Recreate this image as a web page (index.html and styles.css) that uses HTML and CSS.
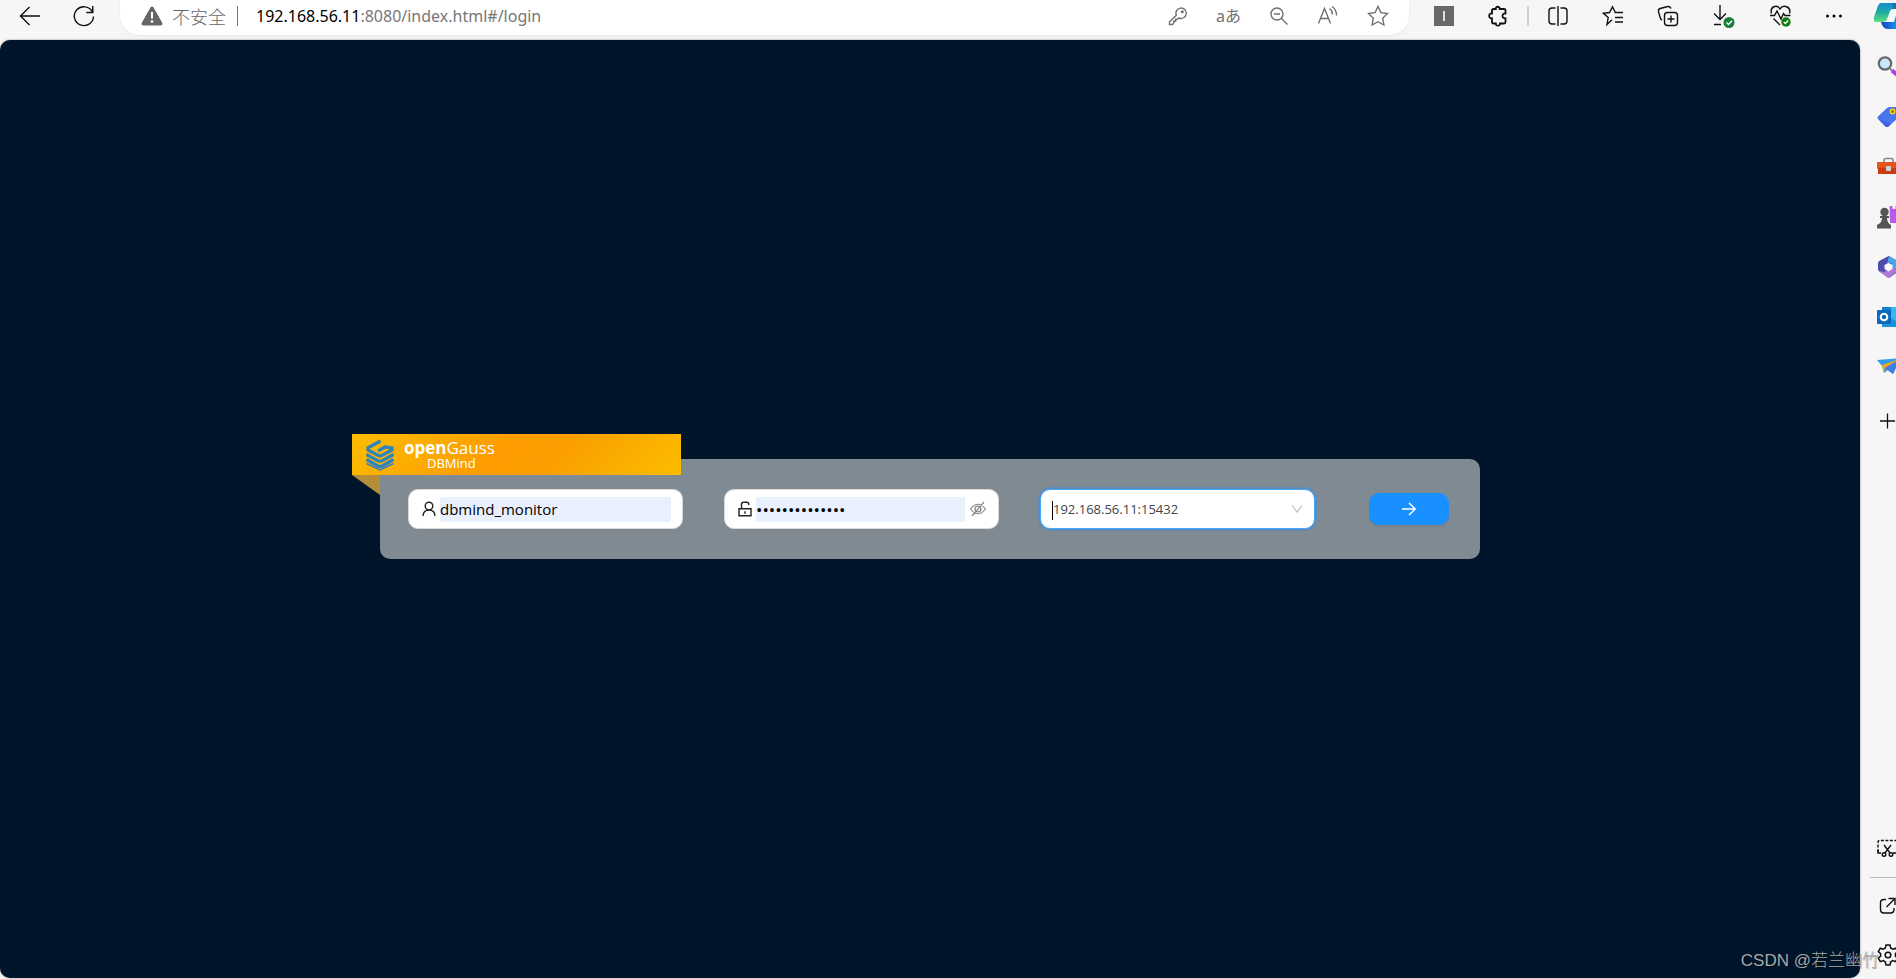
FILE: index.html
```html
<!DOCTYPE html>
<html lang="zh-CN">
<head>
<meta charset="utf-8">
<title>DBMind</title>
<link rel="stylesheet" href="styles.css">
</head>
<body>
<header class="toolbar">
  <button class="tool" type="button" aria-label="Back"><svg width="24" height="24" viewBox="0 0 24 24"><path d="M22 12H2.500M11.500 3 2.500 12 11.500 21"/></svg></button>
  <button class="tool reload" type="button" aria-label="Refresh"><svg width="24" height="24" viewBox="0 0 24 24"><path d="M20.500 8A9.600 9.400 0 1 0 21.500 12.500M20.800 2v6.500h-6.500"/></svg></button>
  <div class="address">
    <svg class="warn" width="22" height="20" viewBox="0 0 22 20"><path d="M11 0.500q1 0 1.600 1L21.300 17q.6 2-1.300 2.500H2Q0 19 .7 17L9.400 1.500q.6-1 1.600-1z" fill="#666"/><path d="M11 6v6.500" stroke="#fff" stroke-width="2"/><circle cx="11" cy="15.500" r="1.300" fill="#fff"/></svg>
    <span class="insecure">不安全</span>
    <span class="divider"></span>
    <span class="url"><b>192.168.56.11</b>:8080/index.html#/login</span>
    <div class="address-icons">
      <button class="tool" type="button" aria-label="Password"><svg width="20" height="20" viewBox="0 0 20 20"><path d="M8.300 9.300A5.200 5.200 0 1 1 11 12L9.500 13.300H7.700v2H5.700v2L4.500 18.500H1.500v-2.700z"/><circle cx="14.300" cy="5.700" r=".8"/></svg></button>
      <button class="tool letters" type="button">aあ</button>
      <button class="tool" type="button" aria-label="Zoom"><svg width="20" height="20" viewBox="0 0 20 20"><circle cx="8" cy="8" r="6"/><path d="M12.500 12.500 18.500 18.500M5 8h6"/></svg></button>
      <button class="tool" type="button" aria-label="Read aloud"><svg width="22" height="22" viewBox="0 0 22 22"><path d="M1.500 18.500 7.500 3.500 13.500 18.500M3.500 13.500h8M12.500 3.500q3 2 3 6M15 1.500q4.500 3 4.500 9"/></svg></button>
      <button class="tool" type="button" aria-label="Favorite"><svg width="22" height="22" viewBox="0 0 22 22"><path d="M11 1.500 13.900 7.600 20.500 8.500 15.700 13.200 16.900 20 11 16.700 5.100 20 6.300 13.200 1.500 8.500 8.100 7.600z"/></svg></button>
    </div>
  </div>
  <div class="actions">
    <button class="tool" type="button" aria-label="Extension I"><svg width="20" height="20" viewBox="0 0 20 20"><path d="M0 0h20v20H0z" fill="#686868" stroke="none"/><path d="M10 5v10" stroke="#fff" stroke-width="1.600"/></svg></button>
    <button class="tool" type="button" aria-label="Extensions"><svg width="22" height="22" viewBox="0 0 22 22"><path class="heavy" d="M6.500 4H8.800C8.300 1 13.200 1 12.700 4H17q1.500 0 1.500 1.500v3C14.500 8 14.500 13.800 18.500 13.300V17q0 1.500-1.500 1.500h-4c.5 2.900-4.700 2.900-4.200 0H6.500Q5 18.500 5 17v-3.700C1.200 13.800 1.200 8 5 8.500v-3Q5 4 6.500 4z"/></svg></button>
    <span class="rule"></span>
    <button class="tool" type="button" aria-label="Split screen"><svg width="22" height="22" viewBox="0 0 22 22"><path d="M8.500 3H5Q2 3 2 6v10q0 3 3 3h3.500M13.500 3H17q3 0 3 3v10q0 3-3 3h-3.500M11 1v20"/></svg></button>
    <button class="tool" type="button" aria-label="Favorites"><svg width="22" height="22" viewBox="0 0 22 22"><path d="M10 14.700 5 19.500 6.200 12.500 1.500 8.300 7.500 7.500 10.500 1.800 13.300 7.500H21M13 12.500h8M13 17h8"/></svg></button>
    <button class="tool" type="button" aria-label="Collections"><svg width="22" height="22" viewBox="0 0 22 22"><rect x="7.500" y="7.500" width="13" height="13" rx="3"/><path d="M14 10.500v7M10.500 14h7M5 15Q3.700 14.500 3.200 12.500L1.500 6.700Q1 4.200 3.200 3.500L10.800 1.500q2.400-.4 3.200 2"/></svg></button>
    <button class="tool" type="button" aria-label="Downloads"><svg width="24" height="24" viewBox="0 0 24 24"><path d="M8 1v14M2 9.500 8 15.500 14 9.500M2 20.500h7"/><circle cx="17" cy="18.500" r="5.500" fill="#168038" stroke="none"/><path d="m14.500 18.500 2 2 3.500-3.800" stroke="#fff"/></svg></button>
    <button class="tool" type="button" aria-label="Performance"><svg width="24" height="24" viewBox="0 0 24 24"><path d="M2.500 9.500C.5 2.500 8 0 11 5 14 0 22.500 2.500 20.500 9.500M1 11.500h4.500L8 7l4 8L14.500 9.500l1.500 2h5.500M4.500 14.500l6.500 6.500"/><circle cx="17" cy="18" r="4.700" fill="#107c10" stroke="none"/><path d="m14.800 18 1.600 1.600 2.800-3" stroke="#fff"/></svg></button>
    <button class="tool" type="button" aria-label="More"><svg width="16" height="20" viewBox="2 0 16 20"><g fill="#000" stroke="none"><circle cx="3.500" cy="10" r="1.500"/><circle cx="10" cy="10" r="1.500"/><circle cx="16.500" cy="10" r="1.500"/></g></svg></button>
  </div>
  <button class="tool copilot" type="button" aria-label="Copilot"><svg width="30" height="28" viewBox="0 0 30 28"><defs><linearGradient id="cg" x1="0" y1="0" x2="0" y2="1"><stop offset="0" stop-color="#168bd2"/><stop offset=".5" stop-color="#20ad9c"/><stop offset="1" stop-color="#62dc83"/></linearGradient><linearGradient id="cb" x2="1"><stop offset="0" stop-color="#1641c5"/><stop offset="1" stop-color="#13b8f8"/></linearGradient></defs><g stroke="none"><path d="M8 20h5l5-13h12v20H14q-4 0-6-7z" fill="url(#cb)"/><path d="M14 1h10q3 0 5 7H18q-1-6-4-7z" fill="#1570c2"/><path d="M8 1h10q2 1 1.500 6l-5 9q-1.500 4-5.500 4H3q-3 0-2-5L4.500 5Q6 1 8 1z" fill="url(#cg)"/><path d="m13 20 4-11q1-2 3-2h5l-4 13z" fill="#f4f9fb"/></g></svg></button>
</header>
<div class="workspace">
  <main class="page">
    <form class="login">
      <div class="ribbon">
        <svg width="30" height="32" viewBox="0 0 30 32"><g fill="none" stroke="#2d83bd" stroke-width="3.200"><path d="M15.500 2 3 8.800V11l10.200 5.400q1.800 1 3.600 0L27 11V9L20 8l-7 4"/><path d="M1.500 15.500 12.800 21.600q2.200 1.200 4.400 0L28.500 15.500M1.500 20.500l11.300 6.500q2.200 1.200 4.400 0l11.300-6.500"/><path d="M1.500 24.500 15 31l13.500-6.500" stroke-width="1.500"/></g></svg>
        <div class="brand"><span class="brand-name"><b>open</b>Gauss</span><span class="brand-sub">DBMind</span></div>
      </div>
      <svg class="fold" width="28" height="20" viewBox="0 0 28 20"><path d="M0 0h28v20z" fill="#b58d37"/></svg>
      <label class="field">
        <svg class="glyph" width="16" height="16" viewBox="0 0 16 16"><circle cx="8" cy="5" r="3.800"/><path d="M2 15q.4-6 6-6t6 6"/></svg>
        <input class="entry" type="text" value="dbmind_monitor" aria-label="Username">
      </label>
      <label class="field">
        <svg class="glyph" width="16" height="16" viewBox="0 0 16 16"><path d="M2 7.700h12v7H2zM4.500 7.500V3.500Q4.500 1.300 6.500 1.300h3.300q2 0 2 2.200V4M8 10.200v2.600"/></svg>
        <input class="entry secret" type="password" value="dbmind_monitor" aria-label="Password">
        <svg class="eye" width="18" height="16" viewBox="0 0 18 16"><path d="M1.500 8Q9-1.500 16.500 8 9 17.500 1.500 8zM15 1 3 15"/><circle cx="9" cy="8" r="2.900"/></svg>
      </label>
      <div class="field focused">
        <span class="caret"></span>
        <select class="choice" aria-label="Instance"><option>192.168.56.11:15432</option></select>
        <svg class="chevron" width="12" height="10" viewBox="0 0 12 10"><path d="M1 1.500 6 8l5-6.500"/></svg>
      </div>
      <div class="submit-cell">
        <button class="submit" type="submit" aria-label="Log in"><svg width="16" height="16" viewBox="0 0 16 16"><path d="M1 8h13M8 2l6.200 6L8 14"/></svg></button>
      </div>
    </form>
    <div class="watermark">CSDN @若兰幽竹</div>
  </main>
  <aside class="sidebar">
    <div class="apps">
      <button class="app" type="button" aria-label="Search"><svg width="24" height="24" viewBox="0 0 24 24"><circle cx="8" cy="8.500" r="6.200" fill="#c7e8fd" stroke="#686868" stroke-width="2.200"/><path d="m12.500 13 3 3" stroke="#888" stroke-width="2"/><path d="m15 15.500 7 6" stroke="#b43af2" stroke-width="4"/></svg></button>
      <button class="app" type="button" aria-label="Shopping"><svg width="24" height="24" viewBox="0 0 24 24"><path d="M1 11.500 10 3q1-1 3-1h7q2 0 2 2v8L11.500 21.500q-1.500 1.200-3 0L1 14q-1-1.200 0-2.500z" fill="#4776ed"/><path d="m1 13.500 7.500 8q1.500 1.200 3 0L14 19z" fill="#3f62e2"/><circle cx="15.500" cy="6.500" r="2.200" fill="#7d752f" stroke="#ffd21d" stroke-width="1.400"/></svg></button>
      <button class="app" type="button" aria-label="Tools"><svg width="24" height="24" viewBox="0 0 24 24"><path d="M7 8V5q0-1.500 1.500-1.500h6Q16 3.500 16 5v3" stroke="#888" stroke-width="1.600" fill="none"/><rect y="7" width="24" height="7" rx="1" fill="#e5541b"/><path d="M1 13h22v6H1z" fill="#c93b11"/><rect x="9" y="11" width="5" height="5" rx="1" fill="#c8d4da"/></svg></button>
      <button class="app" type="button" aria-label="Games"><svg width="24" height="24" viewBox="0 0 24 24"><path d="M12.500 1h3v3h3V1h3v3H24v14H13z" fill="#b65ce8"/><g fill="#555"><circle cx="7.500" cy="7" r="4.200"/><path d="M3 11h9v2h-2q0 5 4 7v3.500H0V20q5-2 5-7H3z"/></g></svg></button>
      <button class="app" type="button" aria-label="Microsoft 365"><svg width="24" height="24" viewBox="0 0 24 24"><path d="M12 1 21 6v11l-9 6-9-6V6z" fill="#6c67d2"/><path d="M2 6 12 1v5l-4 4v8l-5-1q-2-1-2-3V8z" fill="#4b4cae"/><path d="m12 1 9 5v10l-6-4V7l-5 2z" fill="#48a8e7"/><path d="m2 16 6 1 7-5 5 4-9 7z" fill="#b078d5"/><path d="m11.500 8 4 2v4l-4 2.500-4-2.500v-4z" fill="#f7f7f7"/></svg></button>
      <button class="app" type="button" aria-label="Outlook"><svg width="24" height="24" viewBox="0 0 24 24"><path d="M5 2h19v20H5z" fill="#35b8f1"/><path d="M5 2h9v5H5z" fill="#1482cc"/><path d="m14 13 10 6v3H5v-4z" fill="#1593df"/><rect y="5" width="14" height="14" rx="1" fill="#0c68bd"/><circle cx="7" cy="12" r="3.300" fill="none" stroke="#fff" stroke-width="2"/></svg></button>
      <button class="app" type="button" aria-label="Drop"><svg width="24" height="24" viewBox="0 0 24 24"><path d="M0 5 24 3 16 19l-5-4-4 3-2-7z" fill="#2e9bed"/><path d="M5 10 23 4 8 13l-1 5z" fill="#f5a31a"/><path d="m8 13 15-9-7 15z" fill="#3d7ee8"/></svg></button>
      <button class="app add" type="button" aria-label="Customize"><svg width="24" height="24" viewBox="0 0 24 24"><path d="M3 12h15M10.500 4.500v15" stroke="#111" stroke-width="1.300"/></svg></button>
    </div>
    <div class="apps lower">
      <button class="app" type="button" aria-label="Screenshot"><svg width="24" height="24" viewBox="0 0 24 24"><g fill="none" stroke="#111" stroke-width="1.400"><path d="M1 15V5q0-1.500 1.500-1.500H24" stroke-dasharray="3 1.500"/><path d="M1 13v3h3M16 16h3M7 8l6 8M14 8l-6 8"/><circle cx="7" cy="17.500" r="1.800"/><circle cx="14" cy="17.500" r="1.800"/></g></svg></button>
      <hr class="bar">
      <button class="app" type="button" aria-label="Open in window"><svg width="24" height="24" viewBox="0 0 24 24"><path d="M9 5.500H7q-3.500 0-3.500 3.500v6.500q0 3.500 3.500 3.500h6.500q3.500 0 3.500-3.500V14M11.500 4.500H18V11M18 4.500l-8.500 8.500" fill="none" stroke="#111" stroke-width="1.400"/></svg></button>
      <button class="app" type="button" aria-label="Settings"><svg width="24" height="24" viewBox="0 0 24 24"><g fill="none" stroke="#111" stroke-width="1.500"><path d="M9 2h4l.6 3 2.200 1.200 2.900-1 2 3.400-2.300 2v2.600l2.300 2-2 3.400-2.900-1L13.600 19l-.6 3H9l-.6-3-2.200-1.400-2.900 1-2-3.400 2.300-2v-2.600l-2.300-2 2-3.400 2.900 1L8.400 5z"/><circle cx="11" cy="12" r="2.800"/></g></svg></button>
    </div>
  </aside>
</div>
</body>
</html>
```
FILE: styles.css
```css
* { box-sizing: border-box; }

body {
  margin: 0;
  height: 100vh;
  display: flex;
  flex-direction: column;
  overflow: hidden;
  background: #f6f6f6;
  font-family: "Noto Sans", "Noto Sans CJK SC", sans-serif;
}

button {
  padding: 0;
  border: 0;
  background: none;
  font: inherit;
  color: inherit;
}

svg { display: block; flex: none; }

.toolbar {
  height: 40px;
  flex: none;
  display: flex;
  align-items: flex-start;
  padding-left: 18px;
}

.tool {
  flex: none;
  height: 32px;
  display: flex;
  align-items: center;
}

.tool svg {
  fill: none;
  stroke: #111;
  stroke-width: 1.4;
}

.heavy { stroke-width: 1.8; }

.reload { margin: 0 24px 0 30px; }

.address {
  flex: 1;
  height: 35px;
  display: flex;
  padding: 0 20px 3px 21px;
  align-items: center;
  border-radius: 0 0 20px 20px;
  background: #fff;
  box-shadow: 0 1px 3px rgba(0, 0, 0, 0.06);
}

.insecure {
  margin-left: 9px;
  font-family: "Noto Sans CJK SC", sans-serif;
  font-size: 18px;
  font-weight: 300;
  line-height: 32px;
  color: #666;
}

.divider {
  width: 1px;
  height: 20px;
  margin: 0 18px 0 11px;
  background: #777;
}

.url {
  font-family: "Noto Sans", sans-serif;
  font-size: 16px;
  line-height: 32px;
  color: #777;
}

.url b { font-weight: 400; color: #000; }

.address-icons {
  margin-left: auto;
  display: flex;
  gap: 28px;
}

.address-icons .tool svg { stroke: #707070; }

.letters {
  font-size: 16px;
  line-height: 32px;
  color: #707070;
}

.actions {
  display: flex;
  align-items: center;
  gap: 33px;
  margin: 0 31px 0 25px;
}

.rule {
  width: 2px;
  height: 20px;
  margin: 0 -15px;
  background: #d0d0d0;
}

.copilot {
  width: 23px;
  overflow: hidden;
}

.workspace {
  flex: 1;
  min-height: 0;
  display: flex;
}

.page {
  position: relative;
  flex: 1;
  display: flex;
  align-items: center;
  justify-content: center;
  margin-bottom: 1px;
  border-radius: 10px;
  background: #001529;
  box-shadow: 0 0 2px rgba(0, 0, 0, 0.5);
}

.login {
  position: relative;
  width: 1100px;
  max-width: 90%;
  display: grid;
  grid-template-columns: repeat(3, minmax(0, 1fr)) 106px;
  column-gap: 41px;
  padding: 30px 18px 30px 28px;
  border-radius: 10px;
  background: #808a93;
}

.ribbon {
  position: absolute;
  top: -25px;
  left: -28px;
  width: 329px;
  height: 41px;
  display: flex;
  gap: 9px;
  padding: 5px 13px;
  background: linear-gradient(135deg, #fcbd00, #fd9c00 45%, #fb9e00 60%, #fbbd00);
}

.fold {
  position: absolute;
  top: 16px;
  left: -28px;
}

.brand {
  display: flex;
  flex-direction: column;
  font-family: "Open Sans", sans-serif;
  color: #fff;
}

.brand-name {
  font-size: 17px;
  font-weight: 400;
  line-height: 17px;
}

.brand-sub {
  padding-left: 23px;
  font-size: 13px;
  font-weight: 500;
  line-height: 15px;
}

.field {
  position: relative;
  height: 40px;
  display: flex;
  align-items: center;
  padding: 0 11px 0 12px;
  border: 1px solid #d9d9d9;
  border-radius: 10px;
  background: #fff;
}

.focused {
  border-color: #40a9ff;
  box-shadow: 0 0 0 2px rgba(24, 144, 255, 0.3);
}

.glyph {
  margin-right: 3px;
  fill: none;
  stroke: #222;
  stroke-width: 1.4;
}

.entry {
  flex: 1;
  min-width: 0;
  height: 25px;
  padding: 0;
  border: 0;
  border-radius: 2px;
  outline: 0;
  background: #e8f0fe;
  font-family: "Open Sans", sans-serif;
  font-size: 15px;
  color: #000;
}

.secret { font-size: 17px; }

.eye {
  margin-left: 4px;
  fill: none;
  stroke: #888;
  stroke-width: 1.2;
}

.choice {
  flex: 1;
  min-width: 0;
  appearance: none;
  padding: 0;
  border: 0;
  outline: 0;
  background: none;
  font-family: "Open Sans", sans-serif;
  font-size: 13px;
  color: #444;
}

.caret {
  position: absolute;
  left: 11px;
  top: 11px;
  width: 1px;
  height: 19px;
  background: #000;
}

.chevron {
  fill: none;
  stroke: #bfbfbf;
  stroke-width: 1.2;
}

.submit-cell {
  display: flex;
  align-items: center;
  justify-content: center;
}

.submit {
  width: 80px;
  height: 32px;
  display: flex;
  align-items: center;
  justify-content: center;
  border-radius: 10px;
  background: #1890ff;
  box-shadow: 0 2px 0 rgba(0, 0, 0, 0.05);
}

.submit svg {
  fill: none;
  stroke: #fff;
  stroke-width: 1.5;
}

.watermark {
  position: absolute;
  z-index: 1;
  right: -19px;
  bottom: 5px;
  font-family: "Liberation Sans", "Noto Sans CJK SC", sans-serif;
  font-size: 17px;
  font-weight: 300;
  line-height: 24px;
  white-space: nowrap;
  color: #a5a9ad;
  text-shadow: 1px 1px 1px rgba(0, 0, 0, 0.4);
}

.sidebar {
  width: 36px;
  flex: none;
  display: flex;
  flex-direction: column;
  justify-content: space-between;
  overflow: hidden;
  padding: 15px 0 12px 10px;
}

.apps {
  display: flex;
  flex-direction: column;
  gap: 26px;
}

.app {
  width: 24px;
  height: 24px;
  margin-left: 7px;
}

.add { margin-top: 4px; }

.lower { gap: 16px; }

.lower .app:last-child { margin-top: 9px; }

.bar {
  width: 26px;
  height: 1px;
  margin: 0;
  border: 0;
  background: #bbb;
}
```
